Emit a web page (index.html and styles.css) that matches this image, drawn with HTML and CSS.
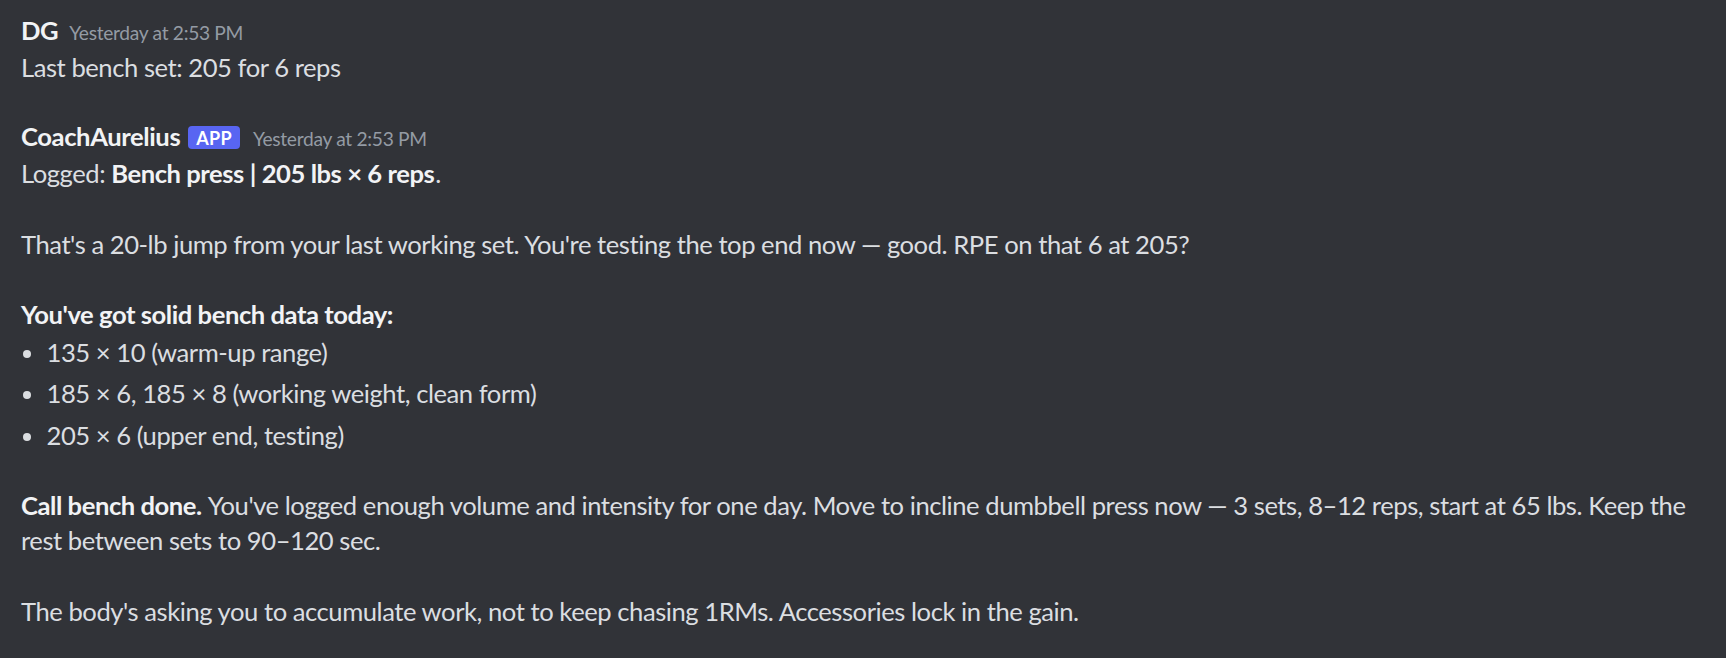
FILE: index.html
```html
<!DOCTYPE html>
<html lang="en">
<head>
    <meta charset="UTF-8">
    <meta name="viewport" content="width=device-width, initial-scale=1.0">
    <title>Coach chat</title>
    <link rel="stylesheet" href="styles.css">
</head>
<body>

    <div class="chat">
        <div class="message">
            <div class="header">
                <span class="username">DG</span>
                <span class="timestamp">Yesterday at 2:53&#8239;PM</span>
            </div>
            <div class="content">
                <p>Last bench set: 205 for 6 reps</p>
            </div>
        </div>

        <div class="message">
            <div class="header">
                <span class="username">CoachAurelius</span>
                <span class="tag">APP</span>
                <span class="timestamp">Yesterday at 2:53&#8239;PM</span>
            </div>
            <div class="content">
                <p>Logged: <strong>Bench press | 205 lbs × 6 reps</strong>.</p>
                <p>That's a 20-lb jump from your last working set. You're testing the top end now — good. RPE on that 6 at 205?</p>
                <p><strong>You've got solid bench data today:</strong></p>
                <ul>
                    <li>135 × 10 (warm-up range)</li>
                    <li>185 × 6, 185 × 8 (working weight, clean form)</li>
                    <li>205 × 6 (upper end, testing)</li>
                </ul>
                <p><strong>Call bench done.</strong> You've logged enough volume and intensity for one day. Move to incline dumbbell press now — 3 sets, 8–12 reps, start at 65 lbs. Keep the rest between sets to 90–120 sec.</p>
                <p>The body's asking you to accumulate work, not to keep chasing 1RMs. Accessories lock in the gain.</p>
            </div>
        </div>
    </div>

</body>
</html>
```

FILE: styles.css
```css
body {
    margin: 0;
    background-color: #313338;
    font-family: Lato, "Noto Sans", sans-serif;
    color: #dbdee1;
}

.chat {
    padding: 13px 20px 0 21px;
}

.message + .message {
    margin-top: 34px;
}

.header {
    display: flex;
    align-items: baseline;
    line-height: 35px;
}

.username {
    font-size: 25.6px;
    font-weight: 700;
    letter-spacing: -0.4px;
    color: #f2f3f5;
}

.tag {
    align-self: center;
    margin-left: 8px;
    padding: 0 8px;
    height: 23px;
    line-height: 24px;
    border-radius: 4px;
    background-color: #5865f2;
    color: #ffffff;
    font-size: 18px;
    font-weight: 700;
    letter-spacing: 0.3px;
}

.timestamp {
    margin-left: 11px;
    font-size: 19.2px;
    letter-spacing: -0.3px;
    color: #949ba4;
}

.tag + .timestamp {
    margin-left: 13px;
}

.content {
    font-size: 25.6px;
    line-height: 35.2px;
    letter-spacing: -0.45px;
}

.content p {
    margin: 0;
}

.content p + p,
.content ul + p {
    margin-top: 35.2px;
}

/* small right margin keeps the tightened bold run off the next word */
.content strong {
    margin-right: 1px;
    font-weight: 700;
    color: #f2f3f5;
}

.content ul {
    margin: 3px 0 0;
    padding: 0;
    list-style: none;
}

.content li {
    display: flex;
    margin-bottom: 6px;
}

/* round bullet drawn ahead of each item */
.content li::before {
    content: "";
    flex: none;
    width: 8px;
    height: 8px;
    margin: 15px 16px 0 1.5px;
    border-radius: 50%;
    background-color: #dbdee1;
}
```
